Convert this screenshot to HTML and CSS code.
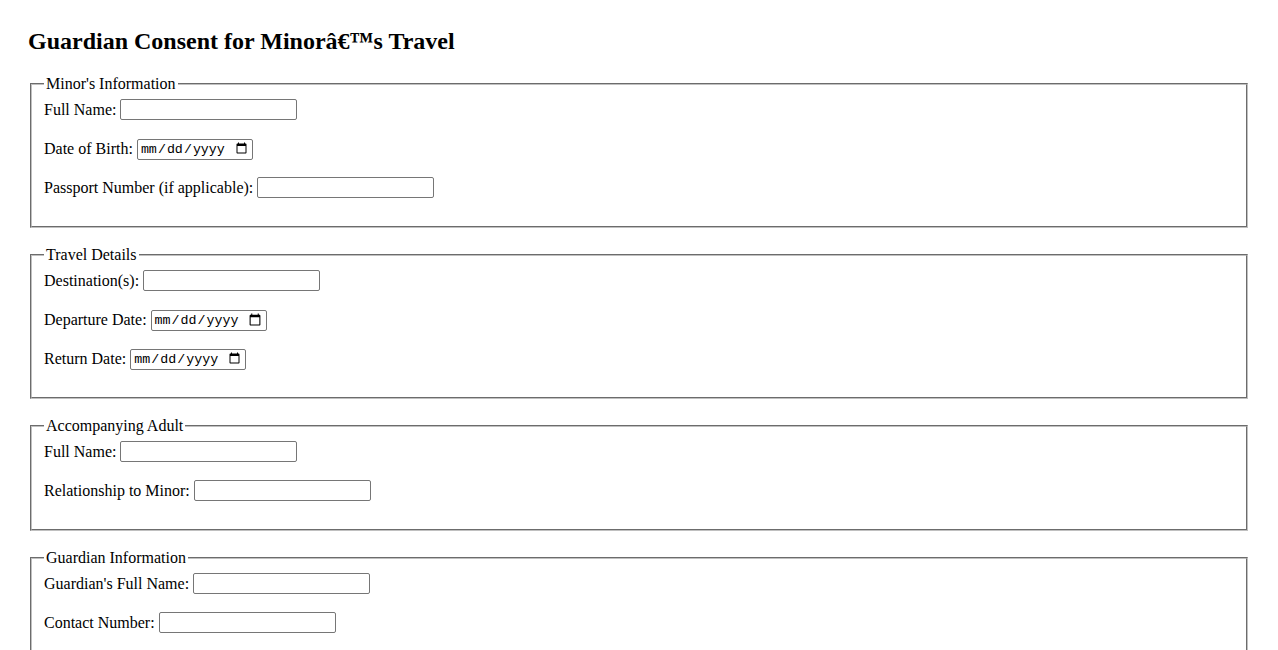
FILE: index.html
```html
<!DOCTYPE html>
<html lang="en">
<head>
<meta charset="utf-8">
<title>Guardian Consent</title>
<link rel="stylesheet" href="styles.css">
</head>
<body>
<h2 class="title">Guardian Consent for Minorâ€™s Travel</h2>
<form class="form">
  <fieldset class="section">
    <legend>Minor's Information</legend>
    <div class="row"><label>Full Name:</label> <input class="text" type="text"></div>
    <div class="row"><label>Date of Birth:</label> <input class="date" type="date"></div>
    <div class="row"><label>Passport Number (if applicable):</label> <input class="text" type="text"></div>
  </fieldset>
  <fieldset class="section">
    <legend>Travel Details</legend>
    <div class="row"><label>Destination(s):</label> <input class="text" type="text"></div>
    <div class="row"><label>Departure Date:</label> <input class="date" type="date"></div>
    <div class="row"><label>Return Date:</label> <input class="date" type="date"></div>
  </fieldset>
  <fieldset class="section">
    <legend>Accompanying Adult</legend>
    <div class="row"><label>Full Name:</label> <input class="text" type="text"></div>
    <div class="row"><label>Relationship to Minor:</label> <input class="text" type="text"></div>
  </fieldset>
  <fieldset class="section">
    <legend>Guardian Information</legend>
    <div class="row"><label>Guardian's Full Name:</label> <input class="text" type="text"></div>
    <div class="row"><label>Contact Number:</label> <input class="text" type="tel"></div>
    <div class="row"><label>Email Address:</label> <input class="text" type="email"></div>
  </fieldset>
</form>
</body>
</html>
```
FILE: styles.css
```css
html, body {
  background: #fff;
}
body {
  margin: 28px;
  font-family: "Liberation Serif", "Times New Roman", serif;
  font-size: 16px;
  color: #000;
}
.title {
  font-size: 24px;
  font-weight: bold;
  margin: 0 0 20px;
}
.form {
  margin: 0;
}
.section {
  margin: 0 2px 18.5px;
  padding: 5.5px 12px 10px;
  border: 2px groove #c0c0c0;
}
.section legend {
  padding: 0 2px;
}
.row {
  margin-bottom: 17px;
  height: 22px;
  line-height: 22px;
}
.row input {
  vertical-align: 1px;
}
.text {
  width: 177px;
  height: 21px;
  box-sizing: border-box;
  border: 1px solid #767676;
  border-radius: 2px;
  padding: 1px 2px;
  font-size: 13.33px;
}
.date {
  width: 116px;
  height: 21px;
  box-sizing: border-box;
  border: 1px solid #767676;
  border-radius: 2px;
  padding: 1px 2px;
  font-family: "Liberation Mono", monospace;
  font-size: 13.33px;
}
```
